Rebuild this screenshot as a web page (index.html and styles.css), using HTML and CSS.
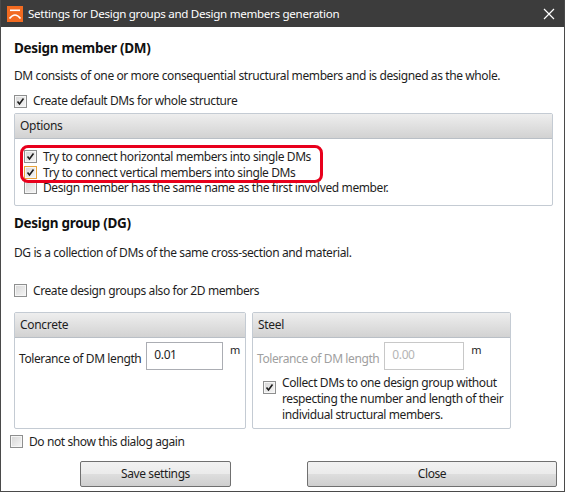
FILE: index.html
```html
<!DOCTYPE html>
<html>
<head>
<meta charset="utf-8">
<link rel="stylesheet" href="styles.css">
</head>
<body>
<div class="window">
  <div class="titlebar">
    <span class="appicon">
      <svg width="16" height="16" viewBox="0 0 16 16"><rect width="16" height="16" fill="#f26b21"/><rect x="3" y="3.5" width="10" height="1.6" fill="#fff"/><path d="M2.5 12.5 Q8 5.5 13.5 12.5" stroke="#fff" stroke-width="1.7" fill="none"/></svg>
    </span>
    <span class="title">Settings for Design groups and Design members generation</span>
    <span class="closex">
      <svg width="12" height="12" viewBox="0 0 12 12"><path d="M1 1 L11 11 M11 1 L1 11" stroke="#fff" stroke-width="1.2"/></svg>
    </span>
  </div>
  <div class="content">
    <div class="h1 h-dm">Design member (DM)</div>
    <div class="text t-dm">DM consists of one or more consequential structural members and is designed as the whole.</div>
    <label class="row r-default"><span class="cb"><svg class="tick" width="11" height="11" viewBox="0 0 11 11"><path d="M2.5 5.5 L4.5 8 L8.5 2.5" stroke="#1c1c1c" stroke-width="1.6" fill="none"/></svg></span>Create default DMs for whole structure</label>

    <div class="group g-options">
      <div class="ghead">Options</div>
      <div class="gbody opts">
        <label class="row"><span class="cb"><svg class="tick" width="11" height="11" viewBox="0 0 11 11"><path d="M2.5 5.5 L4.5 8 L8.5 2.5" stroke="#1c1c1c" stroke-width="1.6" fill="none"/></svg></span>Try to connect horizontal members into single DMs</label>
        <label class="row"><span class="cb hot"><svg class="tick" width="11" height="11" viewBox="0 0 11 11"><path d="M2.5 5.5 L4.5 8 L8.5 2.5" stroke="#1c1c1c" stroke-width="1.6" fill="none"/></svg></span>Try to connect vertical members into single DMs</label>
        <label class="row"><span class="cb"></span>Design member has the same name as the first involved member.</label>
        <div class="highlight"></div>
      </div>
    </div>

    <div class="h1 h-dg">Design group (DG)</div>
    <div class="text t-dg">DG is a collection of DMs of the same cross-section and material.</div>
    <label class="row r-2d"><span class="cb"></span>Create design groups also for 2D members</label>

    <div class="pair">
      <div class="group g-concrete">
        <div class="ghead">Concrete</div>
        <div class="gbody">
          <div class="tol">
            <span class="tlabel">Tolerance of DM length</span>
            <span class="input">0.01</span>
            <span class="unit">m</span>
          </div>
        </div>
      </div>
      <div class="group g-steel">
        <div class="ghead">Steel</div>
        <div class="gbody">
          <div class="tol disabled">
            <span class="tlabel">Tolerance of DM length</span>
            <span class="input">0.00</span>
            <span class="unit">m</span>
          </div>
          <label class="row multi"><span class="cb"><svg class="tick" width="11" height="11" viewBox="0 0 11 11"><path d="M2.5 5.5 L4.5 8 L8.5 2.5" stroke="#1c1c1c" stroke-width="1.6" fill="none"/></svg></span><span>Collect DMs to one design group without respecting the number and length of their individual structural members.</span></label>
        </div>
      </div>
    </div>
  </div>
  <label class="row r-noshow"><span class="cb"></span>Do not show this dialog again</label>
  <div class="buttons">
    <button class="btn b-save">Save settings</button>
    <button class="btn b-close">Close</button>
  </div>
</div>
</body>
</html>
```
FILE: styles.css
```css
html, body {
  margin: 0;
  padding: 0;
  background: #ffffff;
}
body {
  font-family: "Noto Sans", "Open Sans", "DejaVu Sans", sans-serif;
  font-size: 12px;
  color: #1e1e1e;
}
.window {
  width: 563px;
  height: 491px;
  border: 1px solid #4a4a4a;
  border-top: none;
  background: #fff;
  position: relative;
  overflow: hidden;
}
.titlebar {
  height: 27px;
  background: #3c3c3c;
  display: flex;
  align-items: center;
  color: #fff;
}
.appicon {
  width: 16px;
  height: 16px;
  margin-left: 6px;
  display: flex;
}
.title {
  margin-left: 5px;
  font-size: 11.6px;
  letter-spacing: -0.3px;
  flex: 1;
}
.closex {
  width: 12px;
  height: 12px;
  margin-right: 9px;
  display: flex;
}
.content {
  padding: 0 11px 0 13px;
}
.h1 {
  font-weight: bold;
  font-size: 13.5px;
  line-height: 18px;
  letter-spacing: -0.3px;
  color: #111;
}
.h-dm { margin-top: 12px; }
.t-dm { margin-top: 11px; }
.h-dg { margin-top: 8px; }
.t-dg { margin-top: 13px; }
.text {
  line-height: 16px;
  letter-spacing: -0.4px;
}
.row {
  display: flex;
  align-items: center;
  line-height: 16px;
  letter-spacing: -0.4px;
}
.r-default { margin-top: 9px; }
.r-2d { margin-top: 22px; }
.cb {
  flex: none;
  box-sizing: border-box;
  width: 13px;
  height: 13px;
  border: 1px solid #8e8f8f;
  background: linear-gradient(135deg, #d6d6d6, #f6f6f6);
  box-shadow: inset 0 0 0 1px #f6f6f6;
  margin-right: 6px;
  position: relative;
  display: flex;
}
.cb.hot {
  border-color: #e8a33a;
}
.tick {
  display: block;
}
.group {
  border: 1px solid #c4cbd3;
  border-radius: 2px;
  background: #fff;
}
.ghead {
  height: 24px;
  line-height: 24px;
  padding-left: 5px;
  background: linear-gradient(#eeeeee, #d2d2d2);
  border-bottom: 1px solid #b9bfc6;
  letter-spacing: -0.3px;
}
.g-options {
  margin-top: 4px;
}
.gbody {
  padding: 4px 5px 0 4px;
}
.gbody.opts {
  position: relative;
  padding: 10px 0 9px 9px;
}
.opts .row {
  line-height: 15.5px;
}
.highlight {
  position: absolute;
  left: 5px;
  top: 6px;
  width: 297px;
  height: 32px;
  border: 3px solid #e8001c;
  border-radius: 8px;
}
.pair {
  margin-top: 13px;
  display: flex;
  gap: 6px;
}
.g-concrete {
  width: 230px;
  height: 115px;
}
.g-steel {
  width: 257px;
  height: 115px;
}
.tol {
  display: flex;
  align-items: flex-start;
  letter-spacing: -0.4px;
  white-space: nowrap;
}
.tlabel {
  margin-top: 8px;
}
.input {
  box-sizing: border-box;
  width: 80px;
  height: 28px;
  border: 1px solid #abadb3;
  margin-left: 5px;
  padding: 4px 0 0 7px;
  line-height: 16px;
}
.unit {
  margin-left: 7px;
  font-size: 11px;
}
.disabled {
  color: #a0a0a0;
}
.disabled .input {
  border-color: #c8c8c8;
  color: #b5b5b5;
}
.disabled .unit {
  color: #1e1e1e;
}
.multi {
  align-items: flex-start;
  margin-top: 5px;
  margin-left: 6px;
  line-height: 16px;
}
.multi .cb {
  margin-top: 6px;
}
.r-noshow {
  margin: 5px 0 0 9px;
}
.buttons {
  display: flex;
  margin-top: 11px;
}
.btn {
  font-family: inherit;
  font-size: 12px;
  color: #1e1e1e;
  height: 26px;
  border: 1px solid #707070;
  border-radius: 2px;
  background: linear-gradient(#f2f2f2 0%, #ebebeb 48%, #dddddd 52%, #cfcfcf 100%);
  letter-spacing: -0.4px;
  padding: 0;
}
.b-save {
  width: 151px;
  margin-left: 79px;
}
.b-close {
  width: 250px;
  margin-left: 76px;
}
```
